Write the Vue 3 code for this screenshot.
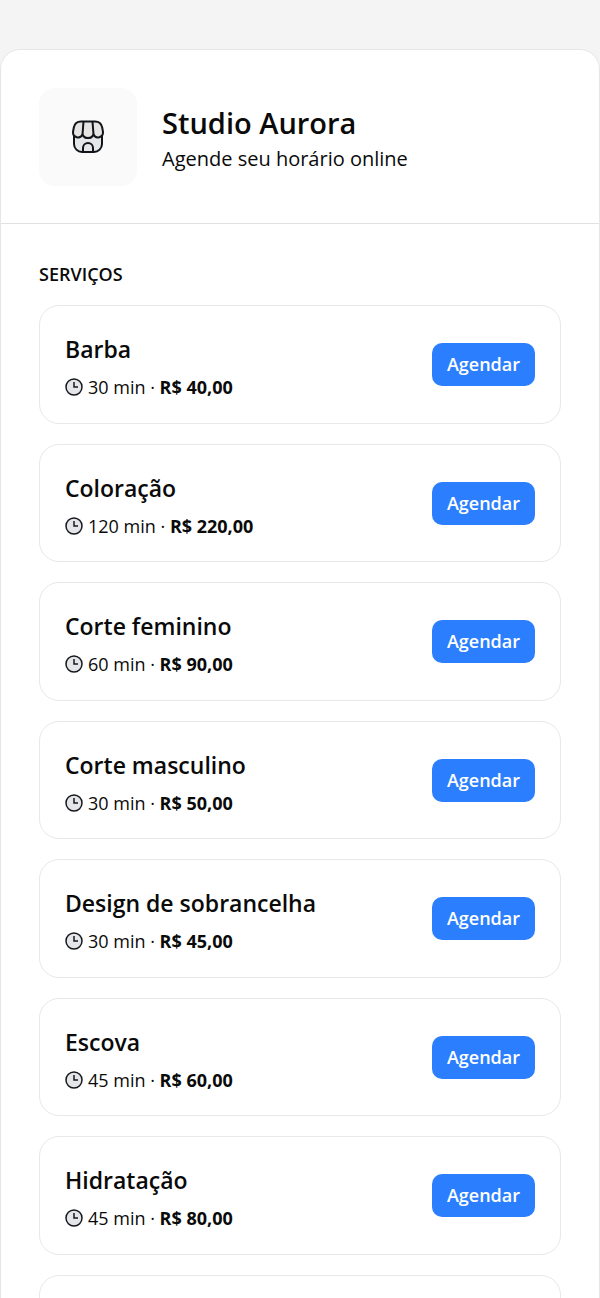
<script setup>
const services = [
  { name: 'Barba', minutes: 30, price: '40,00' },
  { name: 'Coloração', minutes: 120, price: '220,00' },
  { name: 'Corte feminino', minutes: 60, price: '90,00' },
  { name: 'Corte masculino', minutes: 30, price: '50,00' },
  { name: 'Design de sobrancelha', minutes: 30, price: '45,00' },
  { name: 'Escova', minutes: 45, price: '60,00' },
  { name: 'Hidratação', minutes: 45, price: '80,00' }
]
</script>

<template>
  <div class="page">
    <main class="panel">
      <header class="header">
        <div class="logo">
          <svg class="store" viewBox="0 0 34 34" aria-hidden="true">
            <path d="M3 15v9a8 8 0 0 0 8 8h12a8 8 0 0 0 8-8v-9" fill="#e4e6e9" />
            <path d="M10 1.5h14c4.500 0 6.500 2.500 7.200 6l.8 4.500a5 5 0 0 1-9.500 2.500 6 6 0 0 1-11 0A5 5 0 0 1 2 12l.8-4.500C3.500 4 5.500 1.500 10 1.500Z" fill="#e6e4e3" />
            <path d="M11.500 14.500l1-13M22.500 14.500l-1-13M12 32v-4a5 5 0 0 1 10 0v4" fill="none" />
          </svg>
        </div>
        <div class="intro">
          <h1>Studio Aurora</h1>
          <p>Agende seu horário online</p>
        </div>
      </header>
      <section class="services" aria-labelledby="services-title">
        <h2 id="services-title">SERVIÇOS</h2>
        <ul>
          <li v-for="service in services" :key="service.name" class="card">
            <div class="info">
              <h3>{{ service.name }}</h3>
              <p>
                <svg class="clock" viewBox="0 0 18 18" aria-hidden="true">
                  <circle cx="9" cy="9" r="8" fill="#e4e6e9" />
                  <path d="M9 4v5h4" fill="none" />
                </svg>
                <span>{{ service.minutes }} min · <strong>R$ {{ service.price }}</strong></span>
              </p>
            </div>
            <button type="button">Agendar</button>
          </li>
          <li class="card" aria-hidden="true"></li>
        </ul>
      </section>
    </main>
  </div>
</template>

<style>
body {
  background: #f4f4f4;
}
</style>

<style scoped>
.page {
  height: 100vh;
  box-sizing: border-box;
  padding-top: 49px;
  overflow: hidden;
  color: #0a0a0a;
  font-family: "Segoe UI", "Open Sans", "Noto Sans", sans-serif;
}
h1, h2, h3, p, ul {
  margin: 0;
  padding: 0;
}
.panel {
  background: #fff;
  border: 1px solid #e6e6e6;
  border-radius: 20px;
}
.header {
  display: flex;
  align-items: center;
  gap: 25px;
  padding: 38px 38px 37px;
  border-bottom: 1px solid #e2e2e2;
}
.logo {
  display: grid;
  place-items: center;
  flex: none;
  width: 98px;
  height: 98px;
  border-radius: 16px;
  background: #fafafa;
}
.store {
  width: 34px;
  height: 34px;
  stroke: #111418;
  stroke-width: 2;
  stroke-linejoin: round;
}
.intro {
  padding-top: 3px;
}
h1 {
  font-size: 29px;
  font-weight: 600;
  line-height: 40px;
}
.intro p {
  font-size: 20px;
  line-height: 32px;
}
.services {
  padding: 36px 38px;
}
h2 {
  font-size: 18px;
  font-weight: 600;
  line-height: 28px;
}
ul {
  display: flex;
  flex-direction: column;
  gap: 20px;
  margin-top: 17px;
  list-style: none;
}
.card {
  display: flex;
  align-items: center;
  justify-content: space-between;
  gap: 20px;
  padding: 25px 25px 24px;
  border: 1px solid #e8e8e8;
  border-radius: 20px;
}
h3 {
  margin-bottom: 9px;
  font-size: 23px;
  font-weight: 600;
  line-height: 36px;
}
.info p {
  display: flex;
  align-items: center;
  gap: 5px;
  font-size: 18px;
  line-height: 1.25;
}
strong {
  font-weight: 700;
}
.clock {
  flex: none;
  width: 18px;
  height: 18px;
  stroke: #16181c;
  stroke-width: 1.5;
}
button {
  flex: none;
  padding: 8px 15px;
  border: 0;
  border-radius: 10px;
  background: #2b7fff;
  color: #fff;
  font: inherit;
  font-size: 18px;
  font-weight: 600;
  line-height: 27px;
  cursor: pointer;
}
</style>
